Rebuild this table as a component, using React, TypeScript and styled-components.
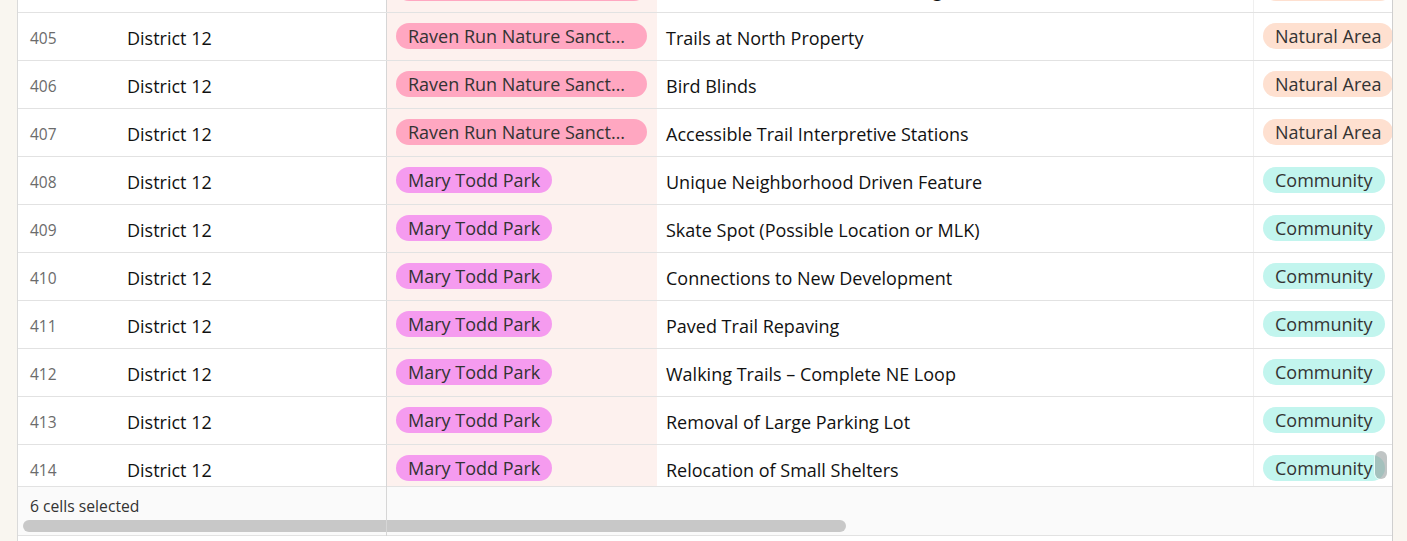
import React, { useLayoutEffect, useRef } from "react";
import styled, { createGlobalStyle } from "styled-components";

const GlobalStyle = createGlobalStyle`
  html, body {
    margin: 0;
    padding: 0;
    height: 100%;
    overflow: hidden;
    background: #f9f6f0;
    font-family: "Open Sans", "Noto Sans", sans-serif;
  }
`;

const pillColors: Record<string, string> = {
  raven: "#ffa7c1",
  mary: "#f59bef",
  natural: "#fee0d0",
  community: "#c2f5ee",
};

type Row = {
  id: number;
  park: string;
  parkKind: string;
  desc: string;
  category: string;
  categoryKind: string;
};

const raven = "Raven Run Nature Sanctuary";
const mary = "Mary Todd Park";

const rows: Row[] = [
  { id: 404, park: raven, parkKind: "raven", desc: "Restroom at Nature Center Bridge", category: "Natural Area", categoryKind: "natural" },
  { id: 405, park: raven, parkKind: "raven", desc: "Trails at North Property", category: "Natural Area", categoryKind: "natural" },
  { id: 406, park: raven, parkKind: "raven", desc: "Bird Blinds", category: "Natural Area", categoryKind: "natural" },
  { id: 407, park: raven, parkKind: "raven", desc: "Accessible Trail Interpretive Stations", category: "Natural Area", categoryKind: "natural" },
  { id: 408, park: mary, parkKind: "mary", desc: "Unique Neighborhood Driven Feature", category: "Community", categoryKind: "community" },
  { id: 409, park: mary, parkKind: "mary", desc: "Skate Spot (Possible Location or MLK)", category: "Community", categoryKind: "community" },
  { id: 410, park: mary, parkKind: "mary", desc: "Connections to New Development", category: "Community", categoryKind: "community" },
  { id: 411, park: mary, parkKind: "mary", desc: "Paved Trail Repaving", category: "Community", categoryKind: "community" },
  { id: 412, park: mary, parkKind: "mary", desc: "Walking Trails – Complete NE Loop", category: "Community", categoryKind: "community" },
  { id: 413, park: mary, parkKind: "mary", desc: "Removal of Large Parking Lot", category: "Community", categoryKind: "community" },
  { id: 414, park: mary, parkKind: "mary", desc: "Relocation of Small Shelters", category: "Community", categoryKind: "community" },
];

const columns = "97px 272px 270px 597px 1fr";

const Page = styled.div`
  display: flex;
  height: 100vh;
  padding-left: 17px;
`;

const Panel = styled.div`
  position: relative;
  width: 1376px;
  height: 100%;
  box-sizing: border-box;
  background: #ffffff;
  border-left: 1px solid #dadada;
  border-right: 1px solid #cfcfcf;
  display: flex;
  flex-direction: column;
  overflow: hidden;
`;

const Body = styled.div`
  height: 486px;
  flex: none;
  overflow: hidden;
`;

const GridRow = styled.div`
  display: grid;
  grid-template-columns: ${columns};
  height: 48px;
  box-sizing: border-box;
  border-bottom: 1px solid #e2e2e2;
`;

const Cell = styled.div<{ $pad?: number; $tint?: boolean; $divider?: string }>`
  display: flex;
  align-items: center;
  padding-left: ${(p) => p.$pad ?? 12}px;
  padding-top: 2px;
  min-width: 0;
  overflow: hidden;
  white-space: nowrap;
  background: ${(p) => (p.$tint ? "#fdf1ee" : "transparent")};
  border-right: ${(p) => (p.$divider ? `1px solid ${p.$divider}` : "none")};
  font-size: 18px;
  color: #111111;
`;

const RowNum = styled.span`
  font-size: 15.5px;
  color: #6b6b6b;
`;

const Pill = styled.span<{ $kind: string; $fill?: boolean }>`
  display: inline-block;
  height: 26px;
  line-height: 26px;
  margin-top: -4px;
  padding: 0 12px;
  border-radius: 13px;
  background: ${(p) => pillColors[p.$kind]};
  color: #333333;
  font-size: 18px;
  white-space: nowrap;
  overflow: hidden;
  text-overflow: ellipsis;
  flex: none;
  max-width: ${(p) => (p.$fill ? "251px" : "none")};
  box-sizing: border-box;
`;

const Footer = styled.div`
  flex: none;
  height: 50px;
  box-sizing: border-box;
  border-top: 1px solid #e2e2e2;
  border-bottom: 1px solid #e2e2e2;
  background: #fafafa;
  display: grid;
  grid-template-columns: 368px 1fr;
`;

const FooterLeft = styled.div`
  padding: 8px 0 0 12px;
  font-size: 15.7px;
  color: #333333;
`;

const FooterDivider = styled.div`
  position: absolute;
  left: 368px;
  top: 486px;
  width: 1px;
  height: 50px;
  background: #d6d6d6;
  z-index: 2;
`;

const HScroll = styled.div`
  position: absolute;
  left: 5px;
  top: 520px;
  width: 823px;
  height: 12px;
  border-radius: 6px;
  background: #c8c8c8;
`;

const VThumb = styled.div`
  position: absolute;
  right: 5px;
  top: 451px;
  width: 12px;
  height: 28px;
  border-radius: 6px;
  background: rgba(140, 150, 150, 0.55);
  box-shadow: 0 0 0 1px rgba(255, 255, 255, 0.6);
`;

export default function App() {
  const bodyRef = useRef<HTMLDivElement>(null);

  useLayoutEffect(() => {
    if (bodyRef.current) bodyRef.current.scrollTop = 35;
  }, []);

  return (
    <>
      <GlobalStyle />
      <Page>
        <Panel>
          <Body ref={bodyRef}>
            {rows.map((r) => (
              <GridRow key={r.id}>
                <Cell>
                  <RowNum>{r.id}</RowNum>
                </Cell>
                <Cell $divider="#d6d6d6">District 12</Cell>
                <Cell $pad={9} $tint>
                  <Pill $kind={r.parkKind} $fill>
                    {r.park}
                  </Pill>
                </Cell>
                <Cell $pad={9} $divider="#efefef">
                  {r.desc}
                </Cell>
                <Cell $pad={9}>
                  <Pill $kind={r.categoryKind}>{r.category}</Pill>
                </Cell>
              </GridRow>
            ))}
          </Body>
          <Footer>
            <FooterLeft>6 cells selected</FooterLeft>
            <div />
          </Footer>
          <HScroll />
          <FooterDivider />
          <VThumb />
        </Panel>
      </Page>
    </>
  );
}
